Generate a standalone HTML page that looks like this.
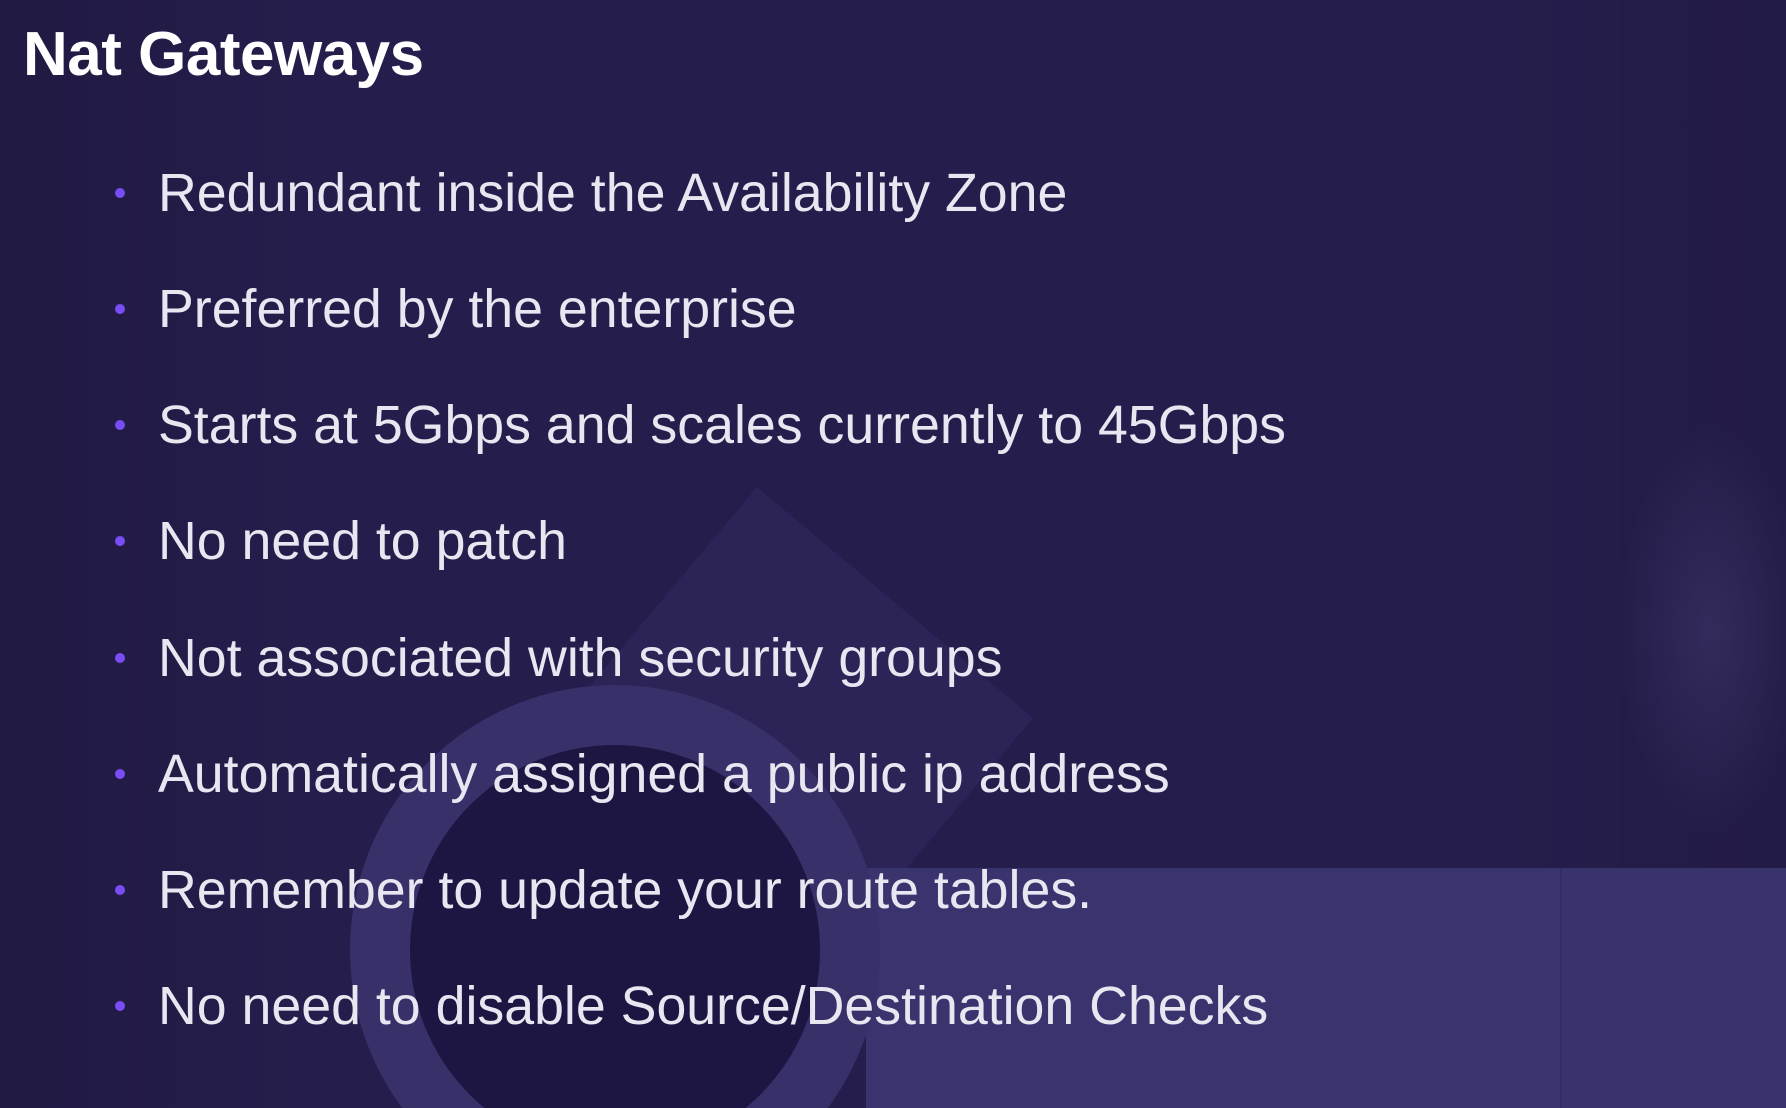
<!DOCTYPE html>
<html><head><meta charset="utf-8"><style>
html,body{margin:0;padding:0;width:1786px;height:1108px;overflow:hidden;background:#251d4b}
body{font-family:"Liberation Sans",sans-serif}
.wrap{position:relative;width:1786px;height:1108px;overflow:hidden}
svg.bgs{position:absolute;left:0;top:0}
h1{position:absolute;left:23px;top:20px;margin:0;font-size:62px;font-weight:bold;color:#fff;line-height:70px;letter-spacing:-0.5px}
.li{position:absolute;left:158px;font-size:53.7px;color:#e8e6f0;line-height:60px;white-space:nowrap}
.dot{position:absolute;left:115px;width:10px;height:10px;border-radius:50%;background:#7a4cf5}
</style></head><body><div class="wrap">
<svg class="bgs" width="1786" height="1108" viewBox="0 0 1786 1108">
<defs>
<clipPath id="c"><rect width="1786" height="1108"/></clipPath>
<linearGradient id="g" x1="0" x2="1" y1="0" y2="0">
<stop offset="0" stop-color="#000" stop-opacity=".12"/><stop offset=".17" stop-color="#000" stop-opacity="0"/>
<stop offset=".84" stop-color="#000" stop-opacity="0"/><stop offset="1" stop-color="#000" stop-opacity=".08"/></linearGradient>
<radialGradient id="f" cx=".6" cy=".5" r=".5"><stop offset="0" stop-color="#5a508c" stop-opacity=".3"/><stop offset="1" stop-color="#5a508c" stop-opacity="0"/></radialGradient>
</defs>
<rect width="1786" height="1108" fill="#251d4b"/>
<rect width="1786" height="1108" fill="url(#g)"/>
<polygon points="757,487 1033,718 801,994 525,763" fill="#2f275b" opacity=".7"/>
<rect x="866" y="868" width="920" height="240" fill="#3a346e"/>
<rect x="1560" y="868" width="226" height="240" fill="#38336b"/>
<rect x="1560" y="868" width="2" height="240" fill="#322d62"/>
<g clip-path="url(#c)"><circle cx="615" cy="950" r="235" fill="#1d1642" stroke="#383169" stroke-width="60"/></g>
<rect x="1600" y="420" width="186" height="420" fill="url(#f)"/>
</svg>
<h1>Nat Gateways</h1>
<div class="dot" style="top:188px"></div><div class="li" style="top:163px">Redundant inside the Availability Zone</div>
<div class="dot" style="top:304px"></div><div class="li" style="top:279px">Preferred by the enterprise</div>
<div class="dot" style="top:420px"></div><div class="li" style="top:395px">Starts at 5Gbps and scales currently to 45Gbps</div>
<div class="dot" style="top:536px"></div><div class="li" style="top:511px">No need to patch</div>
<div class="dot" style="top:653px"></div><div class="li" style="top:628px">Not associated with security groups</div>
<div class="dot" style="top:769px"></div><div class="li" style="top:744px">Automatically assigned a public ip address</div>
<div class="dot" style="top:885px"></div><div class="li" style="top:860px">Remember to update your route tables.</div>
<div class="dot" style="top:1001px"></div><div class="li" style="top:976px">No need to disable Source/Destination Checks</div>
</div></body></html>
